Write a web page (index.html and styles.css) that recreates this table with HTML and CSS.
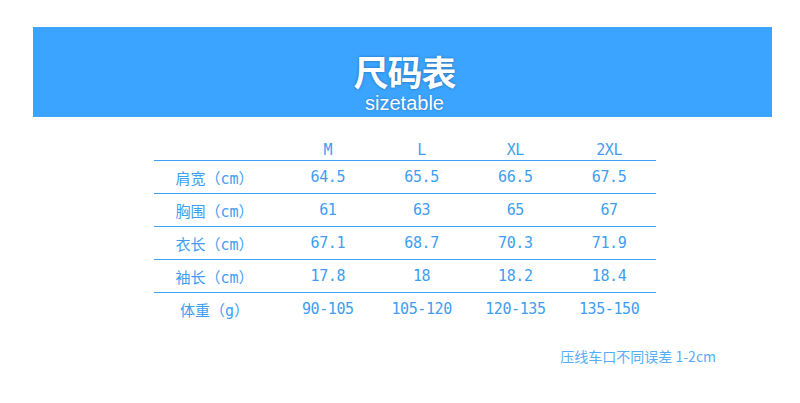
FILE: index.html
```html
<!DOCTYPE html>
<html lang="zh">
<head>
<meta charset="utf-8">
<title>尺码表</title>
<link rel="stylesheet" href="styles.css">
</head>
<body>
<div class="page">
  <header class="banner">
    <h1 class="title">尺码表</h1>
    <div class="subtitle">sizetable</div>
  </header>
  <section class="table">
    <div class="row head">
      <div class="cell label"></div>
      <div class="cell">M</div>
      <div class="cell">L</div>
      <div class="cell">XL</div>
      <div class="cell">2XL</div>
    </div>
    <div class="row">
      <div class="cell label">肩宽（cm）</div>
      <div class="cell">64.5</div>
      <div class="cell">65.5</div>
      <div class="cell">66.5</div>
      <div class="cell">67.5</div>
    </div>
    <div class="row">
      <div class="cell label">胸围（cm）</div>
      <div class="cell">61</div>
      <div class="cell">63</div>
      <div class="cell">65</div>
      <div class="cell">67</div>
    </div>
    <div class="row">
      <div class="cell label">衣长（cm）</div>
      <div class="cell">67.1</div>
      <div class="cell">68.7</div>
      <div class="cell">70.3</div>
      <div class="cell">71.9</div>
    </div>
    <div class="row">
      <div class="cell label">袖长（cm）</div>
      <div class="cell">17.8</div>
      <div class="cell">18</div>
      <div class="cell">18.2</div>
      <div class="cell">18.4</div>
    </div>
    <div class="row last">
      <div class="cell label">体重（g）</div>
      <div class="cell">90-105</div>
      <div class="cell">105-120</div>
      <div class="cell">120-135</div>
      <div class="cell">135-150</div>
    </div>
  </section>
  <p class="note">压线车口不同误差 1-2cm</p>
</div>
</body>
</html>
```

FILE: styles.css
```css
html, body {
  margin: 0;
  padding: 0;
  background: #ffffff;
}

.page {
  width: 800px;
  height: 403px;
  padding-top: 27px;
  box-sizing: border-box;
  overflow: hidden;
}

.banner {
  margin-left: 33px;
  width: 739px;
  height: 90px;
  background: #3aa4ff;
  display: flex;
  flex-direction: column;
  align-items: center;
  box-sizing: border-box;
  padding-top: 27px;
  padding-left: 4px;
}

.title {
  margin: 0;
  font-family: "Noto Sans CJK SC", sans-serif;
  font-weight: 700;
  font-size: 35px;
  line-height: 34px;
  height: 34px;
  color: #ffffff;
  letter-spacing: -1px;
  text-shadow: 0 0 3px rgba(0, 0, 0, 0.35);
}

.subtitle {
  margin-top: 6px;
  font-family: "Liberation Sans", Arial, sans-serif;
  font-size: 20px;
  line-height: 18px;
  height: 18px;
  color: #ffffff;
  text-shadow: 0 0 2px rgba(0, 0, 0, 0.3);
}

.table {
  margin: 23px 0 0 154px;
  width: 502px;
  font-family: "DejaVu Sans Mono", "Noto Sans CJK SC", monospace;
  font-size: 15px;
  letter-spacing: -0.4px;
  color: #3f9ef2;
}

.row {
  display: grid;
  grid-template-columns: 127px repeat(4, 1fr);
  height: 33px;
  border-top: 1px solid #3aa1f7;
  box-sizing: border-box;
}

.row.head {
  height: 20px;
  border-top: none;
}

.cell {
  display: flex;
  align-items: center;
  justify-content: center;
  white-space: nowrap;
}

.row.head .cell {
  align-items: flex-start;
  line-height: 20px;
}

.label {
  font-size: 15px;
  letter-spacing: 0;
  padding-right: 6px;
}

.note {
  margin: 21px 84px 0 0;
  text-align: right;
  font-family: "Noto Sans CJK SC", sans-serif;
  font-size: 14px;
  line-height: 20px;
  color: #55aef8;
}
```
